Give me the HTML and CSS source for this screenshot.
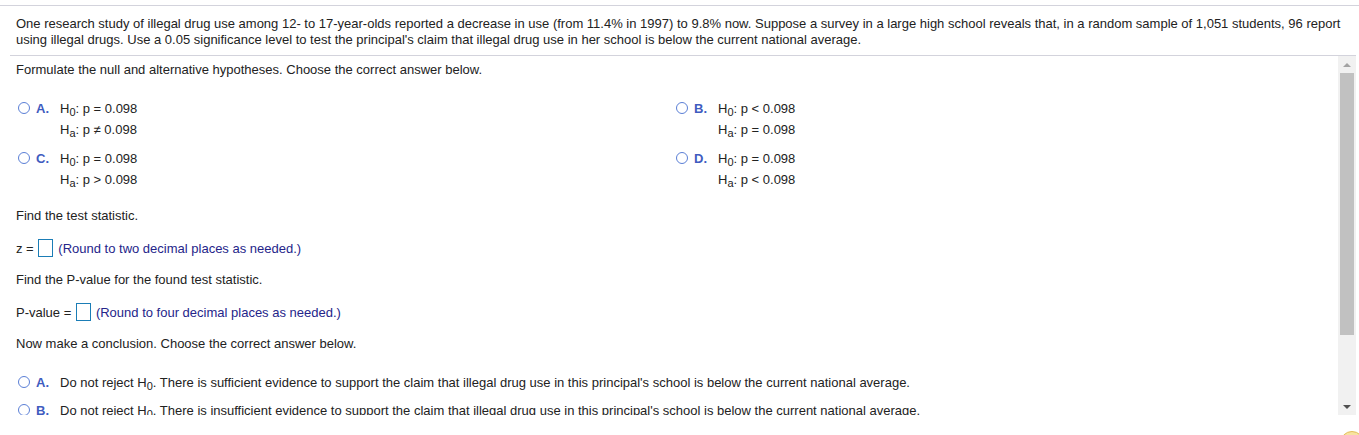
FILE: index.html
```html
<!DOCTYPE html>
<html>
<head>
<meta charset="utf-8">
<link rel="stylesheet" href="styles.css">
</head>
<body>
<div class="top-rule"></div>
<div class="intro">One research study of illegal drug use among 12- to 17-year-olds reported a decrease in use (from 11.4% in 1997) to 9.8% now. Suppose a survey in a large high school reveals that, in a random sample of 1,051 students, 96 report<br>using illegal drugs. Use a 0.05 significance level to test the principal's claim that illegal drug use in her school is below the current national average.</div>
<div class="mid-rule"></div>
<div class="scroll">
  <div class="content">
    <div class="line first">Formulate the null and alternative hypotheses. Choose the correct answer below.</div>
    <div class="options">
      <div class="option">
        <span class="radio"></span><span class="letter">A.</span>
        <div class="ans">H<sub>0</sub>: p = 0.098<br>H<sub>a</sub>: p ≠ 0.098</div>
      </div>
      <div class="option">
        <span class="radio"></span><span class="letter">B.</span>
        <div class="ans">H<sub>0</sub>: p &lt; 0.098<br>H<sub>a</sub>: p = 0.098</div>
      </div>
      <div class="option">
        <span class="radio"></span><span class="letter">C.</span>
        <div class="ans">H<sub>0</sub>: p = 0.098<br>H<sub>a</sub>: p &gt; 0.098</div>
      </div>
      <div class="option">
        <span class="radio"></span><span class="letter">D.</span>
        <div class="ans">H<sub>0</sub>: p = 0.098<br>H<sub>a</sub>: p &lt; 0.098</div>
      </div>
    </div>
    <div class="line gap18">Find the test statistic.</div>
    <div class="entry">z = <span class="box"></span><span class="hint">(Round to two decimal places as needed.)</span></div>
    <div class="line gap14">Find the P-value for the found test statistic.</div>
    <div class="entry">P-value = <span class="box"></span><span class="hint">(Round to four decimal places as needed.)</span></div>
    <div class="line gap14">Now make a conclusion. Choose the correct answer below.</div>
    <div class="concl">
      <div class="option">
        <span class="radio"></span><span class="letter">A.</span>
        <div class="ans">Do not reject H<sub>0</sub>. There is sufficient evidence to support the claim that illegal drug use in this principal's school is below the current national average.</div>
      </div>
      <div class="option">
        <span class="radio"></span><span class="letter">B.</span>
        <div class="ans">Do not reject H<sub>0</sub>. There is insufficient evidence to support the claim that illegal drug use in this principal's school is below the current national average.</div>
      </div>
    </div>
  </div>
  <div class="scrollbar">
    <div class="sb-btn"><span class="tri-up"></span></div>
    <div class="sb-track"><div class="sb-thumb"></div></div>
    <div class="sb-btn"><span class="tri-down"></span></div>
  </div>
</div>
<div class="help"></div>
</body>
</html>
```
FILE: styles.css
```css
html, body {
  margin: 0;
  height: 435px;
  overflow: hidden;
}
body {
  padding-top: 5px;
  box-sizing: border-box;
  font-family: "Liberation Sans", Arial, sans-serif;
  font-size: 13px;
  color: #222;
  background: #fff;
  position: relative;
}
.top-rule {
  border-top: 1px solid #d3d3dc;
}
.intro {
  padding: 10px 16px 7px 16px;
  line-height: 16px;
  white-space: nowrap;
}
.mid-rule {
  margin: 0 3px 0 10px;
  border-top: 1px solid #d3d3dc;
}
.scroll {
  display: flex;
  height: 359px;
  margin-right: 3px;
}
.content {
  flex: 1;
  overflow: hidden;
  padding: 6px 0 0 16px;
}
.line {
  line-height: 16px;
}
.gap18 { margin-top: 18px; }
.gap14 { margin-top: 14px; }
.options {
  display: grid;
  grid-template-columns: 658px 1fr;
  row-gap: 8px;
  margin-top: 20px;
}
.option {
  display: flex;
  align-items: flex-start;
  line-height: 21px;
}
.radio {
  flex: none;
  width: 10px;
  height: 10px;
  border: 1.5px solid #5b7fd6;
  border-radius: 50%;
  margin: 4px 6px 0 2px;
}
.letter {
  flex: none;
  width: 24px;
  color: #3f5cbf;
  font-weight: bold;
}
.ans sub {
  font-size: 11px;
  vertical-align: -3px;
  line-height: 0;
}
.entry {
  display: flex;
  align-items: center;
  height: 20px;
  margin-top: 14px;
  white-space: pre;
}
.box {
  width: 13px;
  height: 16px;
  border: 1px solid #1b7db6;
  margin: 0 5px 0 1px;
}
.hint {
  color: #25258a;
}
.concl {
  margin-top: 20px;
}
.concl .option + .option {
  margin-top: 7px;
}
.scrollbar {
  width: 18px;
  flex: none;
  background: #f1f1f1;
  display: flex;
  flex-direction: column;
}
.sb-btn {
  height: 17px;
  display: flex;
  align-items: center;
  justify-content: center;
}
.sb-track {
  flex: 1;
  padding: 0 2px;
}
.sb-thumb {
  height: 262px;
  background: #c1c1c1;
}
.tri-up {
  width: 0;
  height: 0;
  border-left: 4px solid transparent;
  border-right: 4px solid transparent;
  border-bottom: 4px solid #a3a3a3;
}
.tri-down {
  width: 0;
  height: 0;
  border-left: 4px solid transparent;
  border-right: 4px solid transparent;
  border-top: 4px solid #505050;
}
.help {
  position: absolute;
  left: 1340px;
  top: 431px;
  width: 22px;
  height: 22px;
  border-radius: 50%;
  background: #f7e3a0;
  border: 1px solid #e3be5a;
}
```
